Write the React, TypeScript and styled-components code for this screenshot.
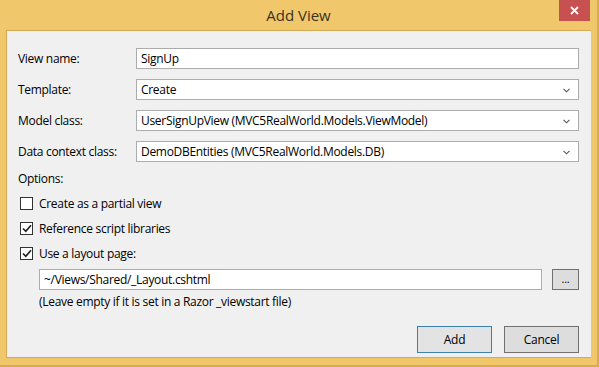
import React from 'react';
import styled, { createGlobalStyle } from 'styled-components';

const GlobalStyle = createGlobalStyle`
  html, body {
    margin: 0;
    padding: 0;
    background: #efc76b;
  }
`;

const font = `"Open Sans", "Noto Sans", "Liberation Sans", sans-serif`;

const Window = styled.div`
  width: 599px;
  height: 367px;
  box-sizing: border-box;
  background: #f0c86b;
  border-right: 2px solid #d8ad52;
  border-bottom: 2px solid #d8ad52;
  display: flex;
  flex-direction: column;
  font-family: ${font};
  overflow: hidden;
`;

const TitleBar = styled.div`
  height: 30px;
  flex-shrink: 0;
  display: flex;
  align-items: flex-start;
  justify-content: center;
  position: relative;
`;

const Title = styled.div`
  font-size: 15px;
  color: #3a3324;
  margin-top: 5px;
  margin-left: 0;
`;

const CloseButton = styled.div`
  position: absolute;
  top: 0;
  right: 7px;
  width: 31px;
  height: 21px;
  background: #c75050;
  display: flex;
  align-items: center;
  justify-content: center;
`;

const Client = styled.div`
  margin: 0 6px 0 6px;
  height: 328px;
  box-sizing: border-box;
  background: #f0f0f0;
  border-left: 1px solid #d5aa55;
  border-top: 1px solid #d5aa55;
  border-bottom: 1px solid #d5aa55;
  padding: 17px 12px 0 11px;
  font-size: 12px;
  letter-spacing: -0.3px;
  color: #000;
  display: flex;
  flex-direction: column;
`;

const FieldRow = styled.div`
  display: flex;
  align-items: center;
  height: 21px;
  margin-bottom: 10px;
`;

const Label = styled.div`
  width: 118px;
`;

const TextBox = styled.div<{ $width?: number }>`
  flex: ${(p) => (p.$width ? 'none' : '1')};
  width: ${(p) => (p.$width ? `${p.$width}px` : 'auto')};
  height: 21px;
  box-sizing: border-box;
  border: 1px solid #acacac;
  background: #fff;
  display: flex;
  align-items: center;
  padding-left: 4px;
  position: relative;
`;

const Chevron = styled.svg`
  position: absolute;
  right: 8px;
  top: 8px;
`;

const OptionsLabel = styled.div`
  margin-top: -2px;
  height: 16px;
`;

const CheckRow = styled.label`
  display: flex;
  align-items: center;
  height: 14px;
  margin-top: 10px;
  margin-left: 2px;
  margin-bottom: 1px;
`;

const Box = styled.span`
  width: 13px;
  height: 13px;
  box-sizing: border-box;
  border: 1px solid #333;
  background: #fff;
  display: flex;
  align-items: center;
  justify-content: center;
  margin-right: 6px;
`;

const LayoutRow = styled.div`
  display: flex;
  align-items: center;
  margin-left: 21px;
  margin-top: 8px;
  gap: 10px;
`;

const BrowseButton = styled.div`
  width: 27px;
  height: 21px;
  box-sizing: border-box;
  border: 1px solid #707070;
  background: #dddddd;
  display: flex;
  align-items: flex-end;
  justify-content: center;
  font-size: 11px;
  line-height: 14px;
  padding-bottom: 3px;
`;

const Hint = styled.div`
  margin-left: 21px;
  margin-top: 3px;
`;

const ButtonBar = styled.div`
  display: flex;
  justify-content: flex-end;
  gap: 12px;
  margin-top: 16px;
`;

const Button = styled.div<{ $default?: boolean }>`
  width: 75px;
  height: 27px;
  box-sizing: border-box;
  border: 1px solid ${(p) => (p.$default ? '#3c7fb1' : '#707070')};
  background: ${(p) => (p.$default ? '#e3e3e3' : '#dddddd')};
  display: flex;
  align-items: center;
  justify-content: center;
`;

const ChevronIcon = () => (
  <Chevron width="7" height="5" viewBox="0 0 7 5">
    <path d="M0.5 0.8 L3.5 3.8 L6.5 0.8" stroke="#555" strokeWidth="1.1" fill="none" />
  </Chevron>
);

const Check = ({ checked }: { checked: boolean }) => (
  <Box>
    {checked && (
      <svg width="10" height="9" viewBox="0 0 10 9">
        <path d="M1 4.5 L3.8 7.3 L9 1.2" stroke="#222" strokeWidth="1.7" fill="none" />
      </svg>
    )}
  </Box>
);

const fields = [
  { label: 'View name:', value: 'SignUp', combo: false },
  { label: 'Template:', value: 'Create', combo: true },
  { label: 'Model class:', value: 'UserSignUpView (MVC5RealWorld.Models.ViewModel)', combo: true },
  { label: 'Data context class:', value: 'DemoDBEntities (MVC5RealWorld.Models.DB)', combo: true },
];

const options = [
  { text: 'Create as a partial view', checked: false },
  { text: 'Reference script libraries', checked: true },
  { text: 'Use a layout page:', checked: true },
];

const App: React.FC = () => {
  return (
    <>
      <GlobalStyle />
      <Window>
        <TitleBar>
          <Title>Add View</Title>
          <CloseButton>
            <svg width="9" height="9" viewBox="0 0 9 9">
              <path d="M1 1 L8 8 M8 1 L1 8" stroke="#fff" strokeWidth="1.8" />
            </svg>
          </CloseButton>
        </TitleBar>
        <Client>
          {fields.map((f) => (
            <FieldRow key={f.label}>
              <Label>{f.label}</Label>
              <TextBox>
                {f.value}
                {f.combo && <ChevronIcon />}
              </TextBox>
            </FieldRow>
          ))}
          <OptionsLabel>Options:</OptionsLabel>
          {options.map((o) => (
            <CheckRow key={o.text}>
              <Check checked={o.checked} />
              {o.text}
            </CheckRow>
          ))}
          <LayoutRow>
            <TextBox $width={503}>~/Views/Shared/_Layout.cshtml</TextBox>
            <BrowseButton>...</BrowseButton>
          </LayoutRow>
          <Hint>(Leave empty if it is set in a Razor _viewstart file)</Hint>
          <ButtonBar>
            <Button $default>Add</Button>
            <Button>Cancel</Button>
          </ButtonBar>
        </Client>
      </Window>
    </>
  );
};

export default App;
